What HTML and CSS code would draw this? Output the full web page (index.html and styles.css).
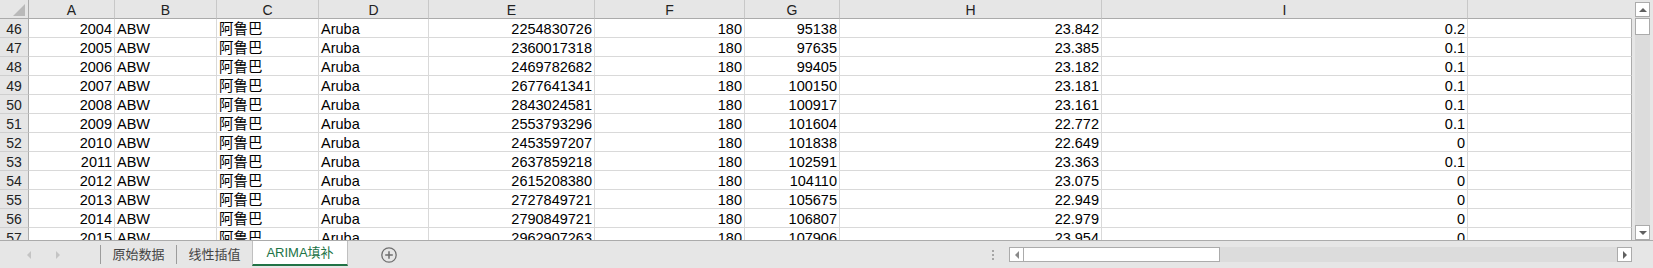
FILE: index.html
```html
<!DOCTYPE html>
<html lang="zh-CN">
<head>
    <meta charset="UTF-8">
    <title>ARIMA填补</title>
    <link rel="stylesheet" href="styles.css">
</head>
<body>
    <div class="workbook">
        <div class="top">
            <div class="sheet">
                <div class="row head">
                    <div class="corner">
                        <svg width="28" height="18" viewBox="0 0 28 18"><polygon points="25,4 25,16 13,16" fill="#b9b9b9"/></svg>
                    </div>
                    <div>A</div><div>B</div><div>C</div><div>D</div><div>E</div>
                    <div>F</div><div>G</div><div>H</div><div>I</div><div class="last"></div>
                </div>
                <div class="row"><div class="rh">46</div><div class="num">2004</div><div>ABW</div><div>阿鲁巴</div><div>Aruba</div><div class="num">2254830726</div><div class="num">180</div><div class="num">95138</div><div class="num">23.842</div><div class="num">0.2</div><div class="last"></div></div>
                <div class="row"><div class="rh">47</div><div class="num">2005</div><div>ABW</div><div>阿鲁巴</div><div>Aruba</div><div class="num">2360017318</div><div class="num">180</div><div class="num">97635</div><div class="num">23.385</div><div class="num">0.1</div><div class="last"></div></div>
                <div class="row"><div class="rh">48</div><div class="num">2006</div><div>ABW</div><div>阿鲁巴</div><div>Aruba</div><div class="num">2469782682</div><div class="num">180</div><div class="num">99405</div><div class="num">23.182</div><div class="num">0.1</div><div class="last"></div></div>
                <div class="row"><div class="rh">49</div><div class="num">2007</div><div>ABW</div><div>阿鲁巴</div><div>Aruba</div><div class="num">2677641341</div><div class="num">180</div><div class="num">100150</div><div class="num">23.181</div><div class="num">0.1</div><div class="last"></div></div>
                <div class="row"><div class="rh">50</div><div class="num">2008</div><div>ABW</div><div>阿鲁巴</div><div>Aruba</div><div class="num">2843024581</div><div class="num">180</div><div class="num">100917</div><div class="num">23.161</div><div class="num">0.1</div><div class="last"></div></div>
                <div class="row"><div class="rh">51</div><div class="num">2009</div><div>ABW</div><div>阿鲁巴</div><div>Aruba</div><div class="num">2553793296</div><div class="num">180</div><div class="num">101604</div><div class="num">22.772</div><div class="num">0.1</div><div class="last"></div></div>
                <div class="row"><div class="rh">52</div><div class="num">2010</div><div>ABW</div><div>阿鲁巴</div><div>Aruba</div><div class="num">2453597207</div><div class="num">180</div><div class="num">101838</div><div class="num">22.649</div><div class="num">0</div><div class="last"></div></div>
                <div class="row"><div class="rh">53</div><div class="num">2011</div><div>ABW</div><div>阿鲁巴</div><div>Aruba</div><div class="num">2637859218</div><div class="num">180</div><div class="num">102591</div><div class="num">23.363</div><div class="num">0.1</div><div class="last"></div></div>
                <div class="row"><div class="rh">54</div><div class="num">2012</div><div>ABW</div><div>阿鲁巴</div><div>Aruba</div><div class="num">2615208380</div><div class="num">180</div><div class="num">104110</div><div class="num">23.075</div><div class="num">0</div><div class="last"></div></div>
                <div class="row"><div class="rh">55</div><div class="num">2013</div><div>ABW</div><div>阿鲁巴</div><div>Aruba</div><div class="num">2727849721</div><div class="num">180</div><div class="num">105675</div><div class="num">22.949</div><div class="num">0</div><div class="last"></div></div>
                <div class="row"><div class="rh">56</div><div class="num">2014</div><div>ABW</div><div>阿鲁巴</div><div>Aruba</div><div class="num">2790849721</div><div class="num">180</div><div class="num">106807</div><div class="num">22.979</div><div class="num">0</div><div class="last"></div></div>
                <div class="row"><div class="rh">57</div><div class="num">2015</div><div>ABW</div><div>阿鲁巴</div><div>Aruba</div><div class="num">2962907263</div><div class="num">180</div><div class="num">107906</div><div class="num">23.954</div><div class="num">0</div><div class="last"></div></div>
            </div>
            <div class="vscroll">
                <div class="vtrack">
                    <div class="sbtn"><span class="arrow up"></span></div>
                    <div class="vthumb"></div>
                    <div class="vspace"></div>
                    <div class="sbtn"><span class="arrow down"></span></div>
                </div>
            </div>
        </div>
        <div class="tabs">
            <div class="nav">
                <span class="arrow left light"></span>
                <span class="arrow right light"></span>
            </div>
            <div class="tab">原始数据</div>
            <div class="tab">线性插值</div>
            <div class="tab active">ARIMA填补</div>
            <div class="add">
                <svg width="16" height="16" viewBox="0 0 16 16">
                    <circle cx="8" cy="8" r="7.2" fill="none" stroke="#6f6f6f" stroke-width="1.3"/>
                    <path d="M8 4.2v7.6M4.2 8h7.6" stroke="#6f6f6f" stroke-width="1.5"/>
                </svg>
            </div>
            <div class="split"><i></i><i></i><i></i></div>
            <div class="hscroll">
                <div class="sbtn small"><span class="arrow left"></span></div>
                <div class="hthumb"></div>
                <div class="hspace"></div>
                <div class="sbtn small"><span class="arrow right"></span></div>
            </div>
        </div>
    </div>
</body>
</html>
```

FILE: styles.css
```css
body {
    margin: 0;
    font-family: "Liberation Sans", "Noto Sans CJK SC", sans-serif;
    background-color: #e6e6e6;
    overflow: hidden;
}

.workbook {
    width: 1653px;
    height: 268px;
    display: flex;
    flex-direction: column;
}

.top {
    display: flex;
    height: 240px;
}

/* Sheet grid */
.sheet {
    flex: 1;
    overflow: hidden;
    background-color: #fff;
}

.row {
    display: grid;
    grid-template-columns: 29px 86px 102px 102px 110px 166px 150px 95px 262px 366px 1fr;
    height: 19px;
}

.row > div {
    box-sizing: border-box;
    border-right: 1px solid #d9d9d9;
    border-bottom: 1px solid #d9d9d9;
    padding: 2px 2px 0 2px;
    font-size: 14.5px;
    line-height: 16px;
    color: #000;
    white-space: nowrap;
    overflow: hidden;
}

.row > .num {
    text-align: right;
}

.row > .rh {
    background-color: #e6e6e6;
    text-align: center;
    font-size: 14px;
    color: #222;
    border-right-color: #ababab;
    border-bottom-color: #cfcfcf;
    padding: 2px 0 0 0;
}

.row > .last {
    border-right-color: #ababab;
}

.head > div {
    background-color: #e6e6e6;
    text-align: center;
    font-size: 14px;
    color: #222;
    border-right-color: #c8c8c8;
    border-bottom-color: #ababab;
}

.head > .corner {
    padding: 0;
    border-right-color: #ababab;
}

.corner svg {
    display: block;
}

.head > .last {
    border-right-color: #e6e6e6;
}

/* Vertical scrollbar */
.vscroll {
    width: 21px;
    padding: 2px 3px 0 3px;
    box-sizing: border-box;
}

.vtrack {
    height: 238px;
    display: flex;
    flex-direction: column;
    background-color: #dcdcdc;
}

.sbtn {
    width: 15px;
    height: 15px;
    box-sizing: border-box;
    background-color: #fff;
    border: 1px solid #ababab;
    display: flex;
    align-items: center;
    justify-content: center;
}

.vthumb {
    height: 17px;
    margin-top: 1px;
    box-sizing: border-box;
    background-color: #fff;
    border: 1px solid #ababab;
}

.vspace {
    flex: 1;
}

.arrow {
    width: 0;
    height: 0;
    display: inline-block;
}

.arrow.up {
    border-left: 4px solid transparent;
    border-right: 4px solid transparent;
    border-bottom: 4px solid #606060;
}

.arrow.down {
    border-left: 4px solid transparent;
    border-right: 4px solid transparent;
    border-top: 4px solid #606060;
}

.arrow.left {
    border-top: 4px solid transparent;
    border-bottom: 4px solid transparent;
    border-right: 4px solid #8a8a8a;
}

.arrow.right {
    border-top: 4px solid transparent;
    border-bottom: 4px solid transparent;
    border-left: 4px solid #606060;
}

.arrow.light.left {
    border-right-color: #c4c4c4;
}

.arrow.light.right {
    border-left-color: #c4c4c4;
}

/* Sheet tabs */
.tabs {
    height: 28px;
    box-sizing: border-box;
    border-top: 1px solid #ababab;
    display: flex;
    align-items: center;
    font-size: 13px;
}

.nav {
    width: 101px;
    box-sizing: border-box;
    border-right: 1px solid #9c9c9c;
    display: flex;
    align-items: center;
    padding-left: 27px;
    gap: 25px;
    height: 19px;
}

.tab {
    width: 76px;
    box-sizing: border-box;
    height: 19px;
    line-height: 19px;
    text-align: center;
    color: #444;
    border-right: 1px solid #9c9c9c;
}

.tab.active {
    height: 25px;
    align-self: flex-start;
    line-height: 24px;
    width: 96px;
    margin-left: -1px;
    background-color: #fff;
    color: #217346;
    border-left: 1px solid #c0c0c0;
    border-right: 1px solid #c0c0c0;
    border-bottom: 2px solid #217346;
}

.add {
    margin-left: 33px;
    width: 16px;
    height: 16px;
}

.add svg {
    display: block;
}

.split {
    margin-left: auto;
    display: flex;
    flex-direction: column;
    gap: 2px;
    margin-right: 15px;
}

.split i {
    width: 2px;
    height: 2px;
    background-color: #a6a6a6;
}

.hscroll {
    width: 623px;
    height: 15px;
    margin-right: 21px;
    display: flex;
    background-color: #dcdcdc;
}

.hthumb {
    width: 197px;
    box-sizing: border-box;
    background-color: #fff;
    border: 1px solid #ababab;
    margin-left: -1px;
}

.hspace {
    flex: 1;
}
```
